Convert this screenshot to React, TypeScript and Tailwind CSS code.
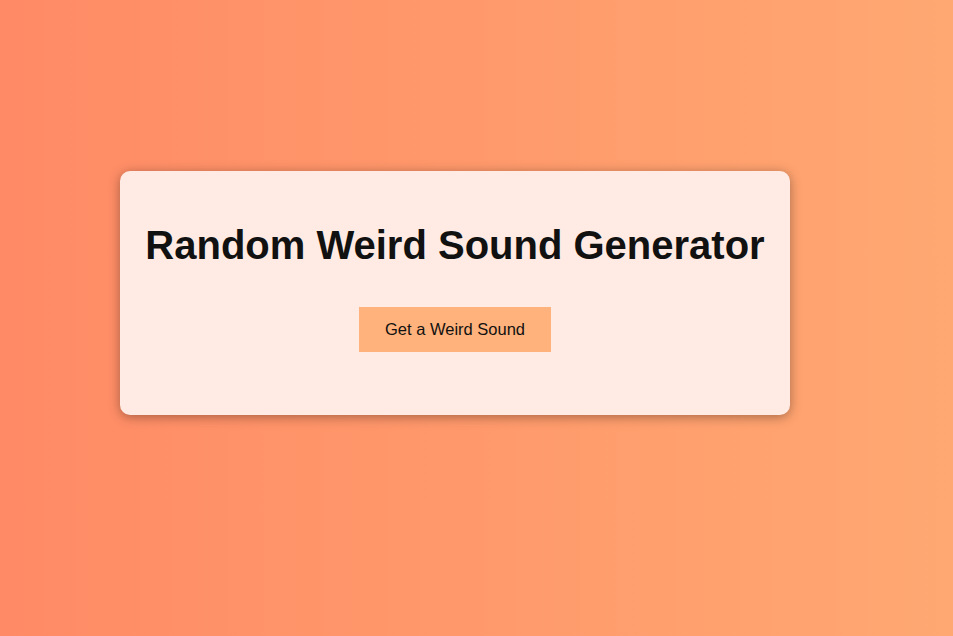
import React from "react";

function App() {
  return (
    <div
      className="h-[636px] w-full bg-gradient-to-r from-[#ff8a65] to-[#ffa872] pl-[120px] pt-[171px]"
      style={{ fontFamily: '"Liberation Sans", Arial, sans-serif' }}
    >
      <div className="flex w-[670px] flex-col items-center rounded-[10px] bg-[#ffebe3] pt-[51px] pb-[63px] shadow-[0_2px_12px_rgba(0,0,0,0.35)]">
        <h1 className="text-[40px] font-bold leading-[46px] text-[#111]">Random Weird Sound Generator</h1>
        <button className="mt-[39px] h-[45px] w-[192px] bg-[#ffb27b] text-[16.5px] text-[#111]">
          Get a Weird Sound
        </button>
      </div>
    </div>
  );
}

export default App;
